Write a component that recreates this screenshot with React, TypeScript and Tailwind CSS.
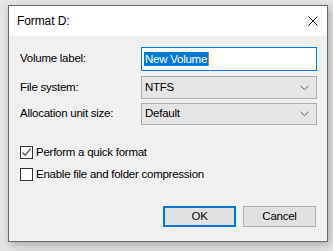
import { useState } from "react";

function Chevron() {
  return (
    <svg width="9" height="6" viewBox="0 0 9 6" className="mr-[7px]">
      <path d="M0.5 0.8 L4.5 4.6 L8.5 0.8" fill="none" stroke="#606060" strokeWidth="1" />
    </svg>
  );
}

function Check() {
  return (
    <svg width="11" height="11" viewBox="0 0 11 11">
      <path d="M1.5 5.5 L4.2 8.3 L9.6 1.6" fill="none" stroke="#5a5a5a" strokeWidth="1.4" />
    </svg>
  );
}

export default function App() {
  const [quick, setQuick] = useState(true);
  const [compress, setCompress] = useState(false);

  return (
    <div className="w-[333px] h-[251px] bg-[#e4e4e4] pt-[5px] pl-[8px] font-['Liberation_Sans',Arial,sans-serif] text-[11.5px] tracking-[-0.25px] text-black overflow-hidden">
      <div className="w-[320px] h-[237px] border border-[#6b6b6b] bg-[#f0f0f0] flex flex-col shadow-[2px_3px_8px_rgba(0,0,0,0.25)]">
        <div className="h-[30px] bg-white flex items-center justify-between pl-[8px] pr-[9px]">
          <span className="text-[12px] tracking-[-0.1px]">Format D:</span>
          <svg width="10" height="10" viewBox="0 0 10 10">
            <path d="M0.5 0.5 L9.5 9.5 M9.5 0.5 L0.5 9.5" stroke="#111" strokeWidth="1" />
          </svg>
        </div>

        <div className="flex flex-col pt-[11px] pl-[11px] pr-[10px]">
          <div className="flex items-center h-[24px]">
            <span className="w-[121px]">Volume label:</span>
            <div className="w-[176px] h-[24px] border border-[#0078d7] bg-white flex items-center pl-[2px]">
              <span className="bg-[#0078d7] text-white leading-[14px] px-[1px]">New Volume</span>
              <span className="w-[1px] h-[14px] bg-[#e07b2a]" />
            </div>
          </div>

          <div className="flex items-center h-[23px] mt-[5px]">
            <span className="w-[121px]">File system:</span>
            <div className="w-[176px] h-[23px] border border-[#adadad] bg-[#e5e5e5] flex items-center justify-between pl-[3px]">
              <span>NTFS</span>
              <Chevron />
            </div>
          </div>

          <div className="flex items-center h-[22px] mt-[4px]">
            <span className="w-[121px]">Allocation unit size:</span>
            <div className="w-[176px] h-[22px] border border-[#adadad] bg-[#e5e5e5] flex items-center justify-between pl-[3px]">
              <span>Default</span>
              <Chevron />
            </div>
          </div>

          <label className="flex items-center h-[13px] mt-[21px] gap-[3px]" onClick={() => setQuick(!quick)}>
            <span className="w-[13px] h-[13px] border border-[#333] bg-white flex items-center justify-center">
              {quick && <Check />}
            </span>
            <span>Perform a quick format</span>
          </label>

          <label className="flex items-center h-[13px] mt-[9px] gap-[3px]" onClick={() => setCompress(!compress)}>
            <span className="w-[13px] h-[13px] border border-[#333] bg-white flex items-center justify-center">
              {compress && <Check />}
            </span>
            <span>Enable file and folder compression</span>
          </label>

          <div className="flex justify-end gap-[7px] mt-[25px]">
            <button className="w-[73px] h-[21px] border-2 border-[#0078d7] bg-[#e1e1e1]">OK</button>
            <button className="w-[73px] h-[21px] border border-[#adadad] bg-[#e1e1e1] mr-[1px]">Cancel</button>
          </div>
        </div>
      </div>
    </div>
  );
}
